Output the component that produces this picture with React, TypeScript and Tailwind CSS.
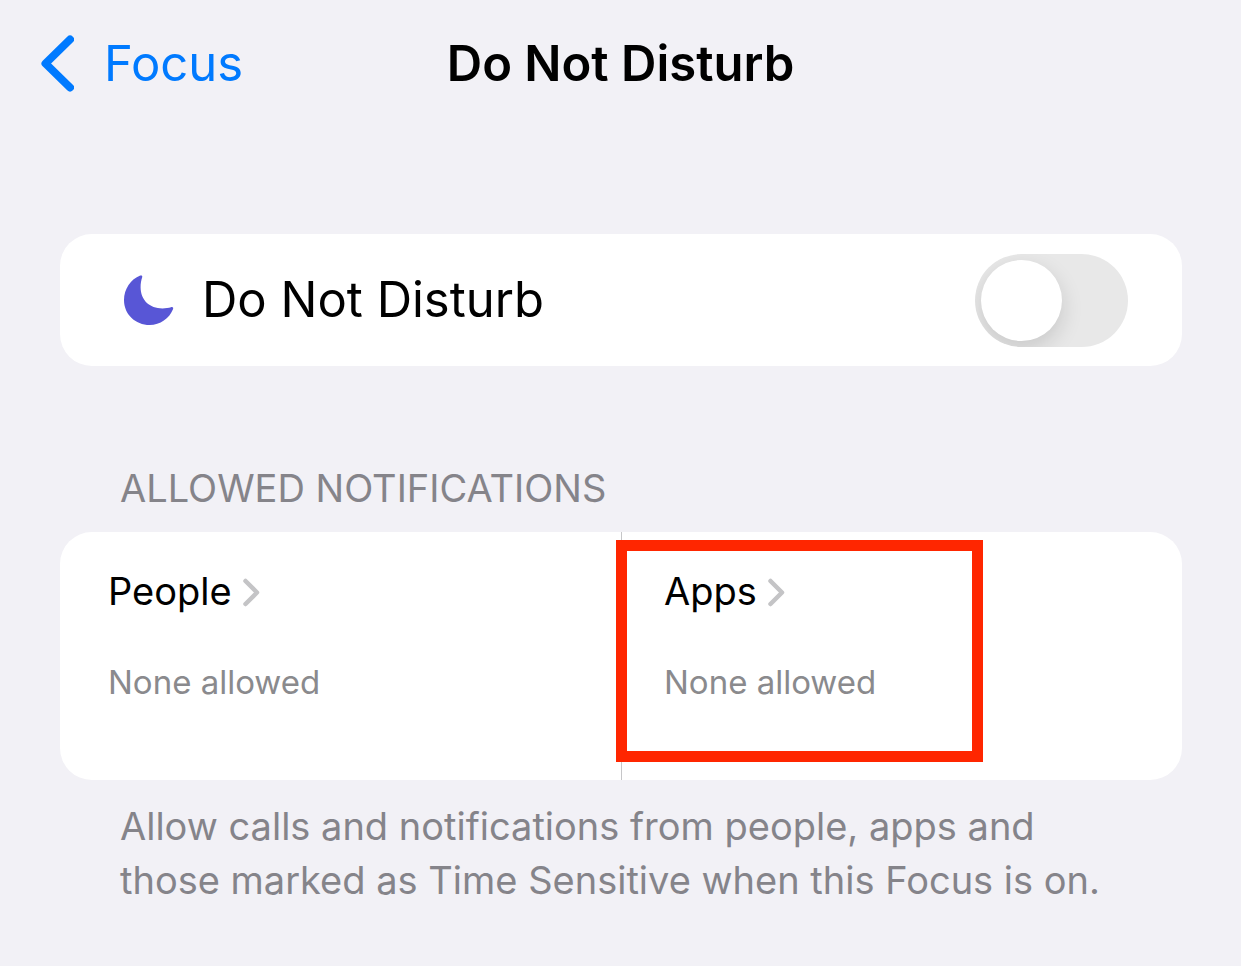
import { useState } from "react";

type AllowedGroup = {
  id: string;
  title: string;
  summary: string;
  highlighted?: boolean;
};

const groups: AllowedGroup[] = [
  { id: "people", title: "People", summary: "None allowed" },
  { id: "apps", title: "Apps", summary: "None allowed", highlighted: true },
];

export default function App() {
  const [enabled, setEnabled] = useState(false);

  return (
    <div className="min-h-screen bg-[#f2f1f6] pb-14 font-['Inter','Liberation_Sans',sans-serif] text-black">
      <header className="grid grid-cols-[1fr_auto_1fr] items-center px-10 py-8">
        <a href="#focus" className="flex items-center gap-[30px] text-[49px] leading-[64px] text-[#007aff]">
          <BackIcon />
          Focus
        </a>
        <h1 className="text-[49px] leading-[64px] font-semibold">Do Not Disturb</h1>
      </header>

      <main className="pt-[106px] pr-[59px] pl-[60px]">
        <section className="flex min-h-[132px] items-center justify-between rounded-[32px] bg-white pr-[54px] pl-16">
          <label htmlFor="dnd" className="flex items-center gap-7 text-[49px] leading-[64px]">
            <MoonIcon />
            Do Not Disturb
          </label>
          <input
            id="dnd"
            type="checkbox"
            role="switch"
            checked={enabled}
            onChange={(e) => setEnabled(e.target.checked)}
            className="h-[93px] w-[153px] shrink-0 cursor-pointer appearance-none overflow-hidden rounded-full bg-[#e8e8e8] p-[6px] before:block before:size-[81px] before:rounded-full before:bg-white before:shadow-[0_8px_22px_rgba(0,0,0,0.14)] before:transition-transform checked:bg-[#34c759] checked:before:translate-x-[60px]"
          />
        </section>

        <section className="pt-[95px]">
          <h2 className="px-[60px] text-[38px] leading-[54px] text-[#85848a]">ALLOWED NOTIFICATIONS</h2>
          <div className="mt-[17px] grid grid-cols-2 rounded-[32px] bg-white">
            {groups.map((g) => (
              <GroupCell key={g.id} group={g} />
            ))}
          </div>
          <p className="mt-[19px] px-[60px] text-[38px] leading-[54px] text-[#85848a]">
            Allow calls and notifications from people, apps and those marked as Time Sensitive when this Focus is on.
          </p>
        </section>
      </main>
    </div>
  );
}

function GroupCell({ group }: { group: AllowedGroup }) {
  return (
    <div className="group relative border-[#c6c6c8] not-first:border-l">
      <a href={`#${group.id}`} className="block pt-[31px] pr-8 pb-[70px] pl-[42px] group-first:pl-12">
        <span className="flex items-center gap-[11px] text-[38px] leading-[56px]">
          {group.title}
          <DisclosureIcon />
        </span>
        <span className="mt-[35px] block text-[33px] leading-[56px] text-[#8a8a8d]">{group.summary}</span>
      </a>
      {group.highlighted && (
        <div className="pointer-events-none absolute top-2 -left-[6px] h-[222px] w-[367px] border-[11px] border-[#ff2600]" />
      )}
    </div>
  );
}

function BackIcon() {
  return (
    <svg width="34" height="58" viewBox="0 0 34 58" fill="none" aria-hidden="true">
      <path
        d="M30 4.5 5.5 28.5 30 52.5"
        stroke="currentColor"
        strokeWidth="8"
        strokeLinecap="round"
        strokeLinejoin="round"
      />
    </svg>
  );
}

function DisclosureIcon() {
  return (
    <svg width="17" height="32" viewBox="0 0 17 32" fill="none" aria-hidden="true">
      <path d="M2.5 6 14 17.5 2.5 29" stroke="#c4c4c6" strokeWidth="4.5" strokeLinecap="round" strokeLinejoin="round" />
    </svg>
  );
}

function MoonIcon() {
  return (
    <svg width="50" height="50" viewBox="0 0 50 50" aria-hidden="true">
      <path
        d="M16.2.6C17.6 0 18.6.7 18.2 2.2C17.2 5.3 16.6 8.6 16.6 12.2C16.6 25 25.6 33.4 38.5 33.4C41.6 33.4 44.6 32.9 47 32.2C48.7 31.7 49.7 32.7 49 34.3C45.2 43.6 36.2 50 25.7 50C11.2 50 0 39.3 0 25C0 14.2 6.8 4.3 16.2.6Z"
        fill="#5856d6"
      />
    </svg>
  );
}
